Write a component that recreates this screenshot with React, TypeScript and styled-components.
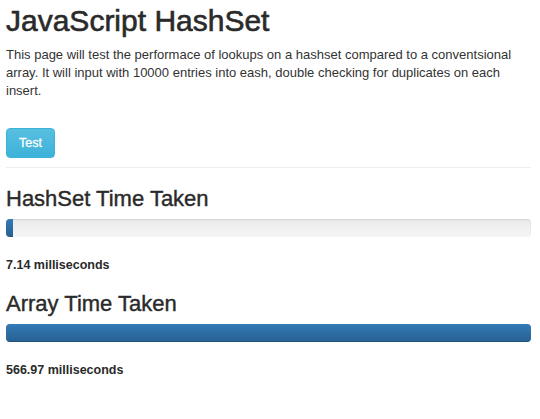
import React from 'react'
import styled, { createGlobalStyle } from 'styled-components'

const GlobalStyle = createGlobalStyle`
  html, body {
    margin: 0;
    padding: 0;
    background: #fff;
  }
  body {
    font-family: "Liberation Sans", Arial, sans-serif;
    color: #333;
  }
`

const Page = styled.div`
  padding: 4px 9px 0 6px;
`

const Title = styled.h1`
  margin: 0 0 9px;
  font-size: 30px;
  line-height: 33px;
  font-weight: 500;
  color: #2a2a2a;
  -webkit-text-stroke: 0.6px #2a2a2a;
`

const Intro = styled.p`
  margin: 0 0 28px;
  font-size: 13px;
  line-height: 18px;
`

const Button = styled.button`
  display: block;
  height: 30px;
  padding: 0 12px;
  border: 1px solid #3ab3d9;
  border-radius: 4px;
  background: linear-gradient(to bottom, #58bfe0 0%, #3eb2d9 100%);
  color: #fff;
  font-family: inherit;
  font-size: 12.5px;
  -webkit-text-stroke: 0.3px #fff;
  cursor: pointer;
`

const Divider = styled.hr`
  margin: 9px 0 19px;
  border: 0;
  border-top: 1px solid #eee;
`

const Section = styled.section`
  margin-bottom: 18px;
`

const Heading = styled.h3`
  margin: 0 0 8px;
  font-size: 22px;
  line-height: 24px;
  font-weight: 500;
  color: #2a2a2a;
  -webkit-text-stroke: 0.4px #2a2a2a;
`

const Track = styled.div`
  height: 18px;
  border-radius: 4px;
  overflow: hidden;
  background: linear-gradient(to bottom, #ebebeb 0%, #f5f5f5 100%);
  box-shadow: inset 0 1px 2px rgba(0, 0, 0, 0.1);
`

const Fill = styled.div`
  height: 100%;
  background: linear-gradient(to bottom, #337ab7 0%, #286090 100%);
  box-shadow: inset 0 -1px 0 rgba(0, 0, 0, 0.15);
`

const Result = styled.div`
  margin-top: 19px;
  font-size: 12.5px;
  line-height: 18px;
  font-weight: bold;
  color: #2a2a2a;
`

const results = [
    { label: 'HashSet Time Taken', ms: 7.14 },
    { label: 'Array Time Taken', ms: 566.97 },
]

const App = () => {
    const max = Math.max(...results.map(r => r.ms))

    return (
        <Page>
            <GlobalStyle />
            <Title>JavaScript HashSet</Title>
            <Intro>
                This page will test the performace of lookups on a hashset compared to a conventsional
                array. It will input with 10000 entries into eash, double checking for duplicates on each
                insert.
            </Intro>
            <Button>Test</Button>
            <Divider />
            {results.map(r => (
                <Section key={r.label}>
                    <Heading>{r.label}</Heading>
                    <Track>
                        <Fill style={{ width: `${Math.max((r.ms / max) * 100, 1.2)}%` }} />
                    </Track>
                    <Result>{r.ms} milliseconds</Result>
                </Section>
            ))}
        </Page>
    )
}

export default App
